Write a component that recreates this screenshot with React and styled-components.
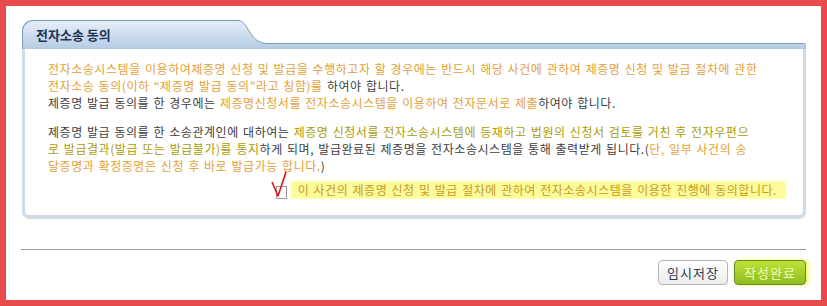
import React from 'react';
import styled, { createGlobalStyle } from 'styled-components';

const GlobalStyle = createGlobalStyle`
  html, body {
    margin: 0;
    padding: 0;
    background: #fff;
  }
  body {
    font-family: "Noto Sans CJK KR", "Liberation Sans", sans-serif;
  }
`;

const App = () => {
  return (
    <Frame>
      <GlobalStyle />
      <Panel>
        <PanelHeader>
          <Tab>전자소송 동의</Tab>
          <TabCurve width="30" height="29" viewBox="0 0 30 29">
            <defs>
              <linearGradient id="tabGrad" x1="0" y1="0" x2="0" y2="1">
                <stop offset="0" stopColor="#e6eef8" />
                <stop offset="1" stopColor="#b4cbe4" />
              </linearGradient>
            </defs>
            <path d="M0 0.5 C11 0.5 10 23.5 30 23.5 L30 29 L0 29 Z" fill="url(#tabGrad)" />
            <path d="M0 0.5 C11 0.5 10 23.5 30 23.5" fill="none" stroke="#7f9bbb" strokeWidth="1" />
          </TabCurve>
          <Strip />
        </PanelHeader>
        <PanelBody>
          <Para>
            <Line><Orange>전자소송시스템을 이용하여제증명 신청 및 발급을 수행하고자 할 경우에는 반드시 해당 사건에 관하여 제증명 신청 및 발급 절차에 관한</Orange></Line>
            <Line><Orange>전자소송 동의(이하 “제증명 발급 동의”라고 칭함)를 </Orange>하여야 합니다.</Line>
            <Line>제증명 발급 동의를 한 경우에는 <Orange>제증명신청서를 전자소송시스템을 이용하여 전자문서로 제출</Orange>하여야 합니다.</Line>
          </Para>
          <Para>
            <Line>제증명 발급 동의를 한 소송관계인에 대하여는 <Olive>제증명 신청서를 전자소송시스템에 등재하고 법원의 신청서 검토를 거친 후 전자우편으</Olive></Line>
            <Line><Olive>로 발급결과(발급 또는 발급불가)를 통지</Olive>하게 되며, 발급완료된 제증명을 전자소송시스템을 통해 출력받게 됩니다.(<Orange>단, 일부 사건의 송</Orange></Line>
            <Line><Orange>달증명과 확정증명은 신청 후 바로 발급가능 합니다.</Orange>)</Line>
          </Para>
          <AgreeRow>
            <CheckMark width="20" height="30" viewBox="0 0 20 30">
              <rect x="5.5" y="16.5" width="10" height="12" fill="none" stroke="#9a9a9a" strokeWidth="1" />
              <path d="M1 12 L7 26 L15 2" fill="none" stroke="#e0101a" strokeWidth="1.6" strokeLinejoin="round" />
            </CheckMark>
            <AgreeText>이 사건의 제증명 신청 및 발급 절차에 관하여 전자소송시스템을 이용한 진행에 동의합니다.</AgreeText>
          </AgreeRow>
        </PanelBody>
      </Panel>
      <Divider />
      <ButtonRow>
        <Button>임시저장</Button>
        <Button primary>작성완료</Button>
      </ButtonRow>
    </Frame>
  );
};

const Frame = styled.div`
  box-sizing: border-box;
  width: 827px;
  height: 306px;
  border: 6px solid #e84b4b;
  background: #fff;
  padding: 14px 15px 0 16px;
  display: flex;
  flex-direction: column;
`;

const Panel = styled.div`
  display: flex;
  flex-direction: column;
`;

const PanelHeader = styled.div`
  display: flex;
  align-items: flex-end;
  height: 29px;
`;

const Tab = styled.div`
  box-sizing: border-box;
  width: 216px;
  height: 29px;
  border: 1px solid #7f9bbb;
  border-right: none;
  border-bottom: none;
  border-top-left-radius: 11px;
  background: linear-gradient(#e6eef8, #b4cbe4);
  padding: 3px 0 0 13px;
  font-size: 13px;
  font-weight: bold;
  line-height: 22px;
  color: #1f3455;
`;

const TabCurve = styled.svg`
  display: block;
  flex: none;
`;

const Strip = styled.div`
  box-sizing: border-box;
  flex: 1;
  height: 6px;
  border-top: 1px solid #7f9bbb;
  border-right: 1px solid #9fb6cf;
  border-top-right-radius: 2px;
  background: linear-gradient(#c3d6ea, #aec6e0);
`;

const PanelBody = styled.div`
  border: 3px solid #cfdce8;
  border-top: none;
  border-radius: 0 0 7px 7px;
  box-shadow: 0 1px 1px rgba(120, 150, 180, 0.35);
  padding: 11px 18px 17px 23px;
  font-size: 12px;
  line-height: 17px;
  color: #3d3d3d;
  letter-spacing: 0.55px;
  word-spacing: 1px;
`;

const Para = styled.div`
  margin-bottom: 12px;
`;

const Line = styled.div`
  white-space: nowrap;
`;

const Orange = styled.span`
  color: #e4a036;
`;

const Olive = styled.span`
  color: #a99c0a;
`;

const AgreeRow = styled.div`
  display: flex;
  justify-content: flex-end;
  align-items: flex-end;
  height: 16px;
  margin-top: -4px;
`;

const CheckMark = styled.svg`
  display: block;
  flex: none;
  margin-bottom: -2px;
  margin-right: 1px;
`;

const AgreeText = styled.span`
  white-space: nowrap;
  color: #c99a1e;
  background: #fbfb9c;
  box-shadow: 0 0 3px 1px #fbfbb0;
  padding: 0 8px 0 6px;
  line-height: 16px;
`;

const Divider = styled.div`
  height: 1px;
  background: #9a9a9a;
  margin: 31px 0 0 -1px;
`;

const ButtonRow = styled.div`
  display: flex;
  justify-content: flex-end;
  gap: 6px;
  margin-top: 10px;
`;

const Button = styled.div`
  box-sizing: border-box;
  width: ${(p) => (p.primary ? '72px' : '70px')};
  height: 25px;
  border-radius: 4px;
  font-size: 13px;
  line-height: 23px;
  text-align: center;
  letter-spacing: 1px;
  border: 1px solid ${(p) => (p.primary ? '#5f8a1e' : '#b4b4b4')};
  color: ${(p) => (p.primary ? '#effcb8' : '#2b3a4f')};
  background: ${(p) =>
    p.primary
      ? 'linear-gradient(#bde23a, #8fbd1e)'
      : 'linear-gradient(#ffffff, #ececec)'};
  box-shadow: ${(p) => (p.primary ? '3px 0 4px #f4f77a' : 'none')};
`;

export default App;
